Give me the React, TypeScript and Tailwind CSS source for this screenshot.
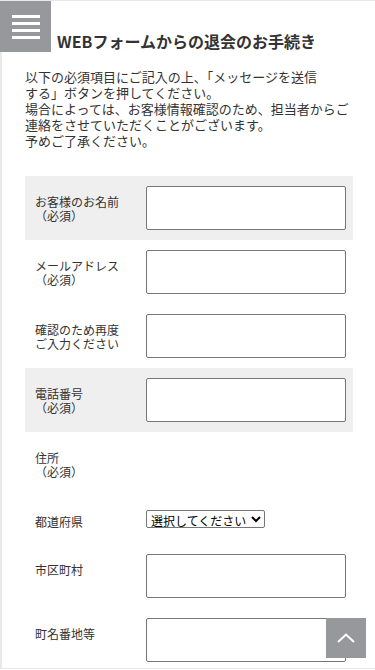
const FONT = '"Noto Sans CJK JP", "Liberation Sans", sans-serif'

type Row = {
  label: string[]
  gray?: boolean
  kind: 'input' | 'none' | 'select'
  h: string
}

const rows: Row[] = [
  { label: ['お客様のお名前', '（必須）'], gray: true, kind: 'input', h: 'h-[64px]' },
  { label: ['メールアドレス', '（必須）'], kind: 'input', h: 'h-[64px]' },
  { label: ['確認のため再度', 'ご入力ください'], kind: 'input', h: 'h-[64px]' },
  { label: ['電話番号', '（必須）'], gray: true, kind: 'input', h: 'h-[64px]' },
  { label: ['住所', '（必須）'], kind: 'none', h: 'h-[64px]' },
  { label: ['都道府県'], kind: 'select', h: 'h-[48px]' },
  { label: ['市区町村'], kind: 'input', h: 'h-[64px]' },
  { label: ['町名番地等'], kind: 'input', h: 'h-[64px]' },
]

function FormRow({ row }: { row: Row }) {
  return (
    <div className={`flex ${row.h} ${row.gray ? 'bg-[#efefef]' : ''}`}>
      <div className="w-[121px] shrink-0 pl-[10px] pt-[19px] text-[12px] leading-[14px] text-[#333]">
        {row.label.map((l) => (
          <div key={l}>{l}</div>
        ))}
      </div>
      <div className="flex-1">
        {row.kind === 'input' && (
          <input
            type="text"
            className="mt-[10px] block h-[44px] w-[200px] rounded-[2px] border border-[#767676] bg-white"
          />
        )}
        {row.kind === 'select' && (
          <select
            className="mt-[14px] block h-[18px] w-[119px] rounded-[2px] border border-[#767676] bg-white text-[12px] leading-[14px] text-black"
            style={{ fontFamily: FONT }}
          >
            <option>選択してください</option>
          </select>
        )}
      </div>
    </div>
  )
}

export default function App() {
  return (
    <div className="relative h-[670px] w-[375px] overflow-hidden bg-white" style={{ fontFamily: FONT }}>
      <div className="h-[669px] overflow-hidden border-t border-b border-l-2 border-[#e8e8e8]">
        <h1 className="ml-[55px] mt-[30px] text-[16px] font-bold leading-[20px] text-[#333]">
          WEBフォームからの退会のお手続き
        </h1>
        <p className="mt-[18px] px-[23px] text-[13px] leading-[16px] text-[#333]">
          以下の必須項目にご記入の上、「メッセージを送信
          <br />
          する」ボタンを押してください。
          <br />
          場合によっては、お客様情報確認のため、担当者からご
          <br />
          連絡をさせていただくことがございます。
          <br />
          予めご了承ください。
        </p>
        <div className="ml-[23px] mr-[22px] mt-[27px]">
          {rows.map((r) => (
            <FormRow key={r.label[0]} row={r} />
          ))}
        </div>
      </div>

      {/* menu button */}
      <div className="absolute left-0 top-[1px] flex h-[51px] w-[51px] flex-col items-center justify-center gap-[4px] bg-[#97989c]">
        <span className="block h-[3px] w-[28px] bg-white" />
        <span className="block h-[3px] w-[28px] bg-white" />
        <span className="block h-[3px] w-[28px] bg-white" />
        <span className="block h-[3px] w-[28px] bg-white" />
      </div>

      {/* page top */}
      <div className="absolute left-[326px] top-[618px] flex h-[40px] w-[40px] items-center justify-center bg-[#97989c]">
        <svg width="18" height="10" viewBox="0 0 18 10" fill="none">
          <path d="M1 9 L9 1.5 L17 9" stroke="white" strokeWidth="2" />
        </svg>
      </div>
    </div>
  )
}
